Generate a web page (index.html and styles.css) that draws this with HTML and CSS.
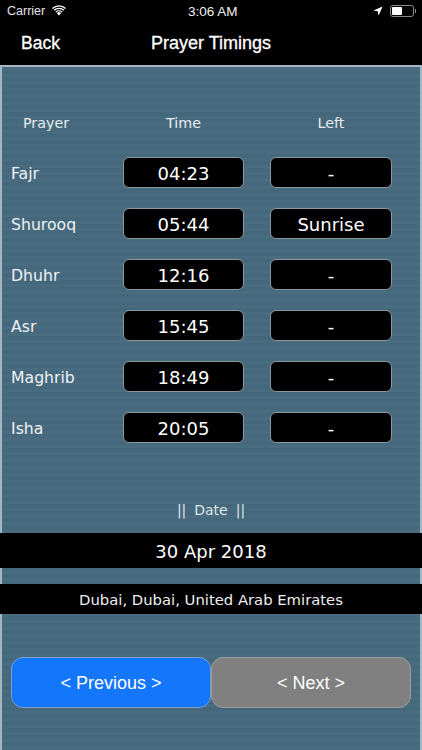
FILE: index.html
```html
<!DOCTYPE html>
<html lang="en">
<head>
  <meta charset="UTF-8">
  <meta name="viewport" content="width=device-width, initial-scale=1.0">
  <title>Prayer Timings</title>
  <link rel="stylesheet" href="styles.css">
</head>
<body>
  <div id="app">
    <!-- Status bar -->
    <div class="status-bar">
      <div class="status-left">
        <span>Carrier</span>
        <svg class="wifi" width="14" height="11" viewBox="0 0 16 12">
          <path d="M8 11.6 5.6 9a3.4 3.4 0 0 1 4.8 0z" fill="#fff"/>
          <path d="M3.9 7.3a5.9 5.9 0 0 1 8.2 0l-1 1.1a4.4 4.4 0 0 0-6.2 0z" fill="#fff"/>
          <path d="M1.9 5.2a8.8 8.8 0 0 1 12.2 0l-1 1.1a7.3 7.3 0 0 0-10.2 0z" fill="#fff"/>
          <path d="M0 3.2a11.5 11.5 0 0 1 16 0l-1 1.1a10 10 0 0 0-14 0z" fill="#fff"/>
        </svg>
      </div>
      <div class="status-time">3:06 AM</div>
      <div class="status-right">
        <svg width="10" height="10" viewBox="0 0 10 10">
          <path d="M9.6.4 5.6 9.6 4.7 5.3.4 4.4z" fill="#fff"/>
        </svg>
        <div class="battery"><div class="battery-level"></div></div>
        <div class="battery-cap"></div>
      </div>
    </div>

    <!-- Nav bar -->
    <header class="nav-bar">
      <span class="back">Back</span>
      <h1>Prayer Timings</h1>
    </header>

    <!-- Timings panel -->
    <main class="panel">
      <div class="table-head">
        <span class="head-prayer">Prayer</span>
        <span>Time</span>
        <span>Left</span>
      </div>

      <div class="timings">
        <div class="row">
          <span class="name">Fajr</span>
          <span class="box">04:23</span>
          <span class="box">-</span>
        </div>
        <div class="row">
          <span class="name">Shurooq</span>
          <span class="box">05:44</span>
          <span class="box">Sunrise</span>
        </div>
        <div class="row">
          <span class="name">Dhuhr</span>
          <span class="box">12:16</span>
          <span class="box">-</span>
        </div>
        <div class="row">
          <span class="name">Asr</span>
          <span class="box">15:45</span>
          <span class="box">-</span>
        </div>
        <div class="row">
          <span class="name">Maghrib</span>
          <span class="box">18:49</span>
          <span class="box">-</span>
        </div>
        <div class="row">
          <span class="name">Isha</span>
          <span class="box">20:05</span>
          <span class="box">-</span>
        </div>
      </div>

      <div class="date-label">|| Date ||</div>
      <div class="date-bar">30 Apr 2018</div>
      <div class="location-bar">Dubai, Dubai, United Arab Emirates</div>

      <div class="buttons">
        <button class="btn-prev">&lt; Previous &gt;</button>
        <button class="btn-next">&lt; Next &gt;</button>
      </div>
    </main>
  </div>
</body>
</html>
```

FILE: styles.css
```css
/* General reset */
* {
  margin: 0;
  padding: 0;
  box-sizing: border-box;
}

body {
  width: 422px;
  height: 750px;
  overflow: hidden;
  background-color: #000;
  font-family: "DejaVu Sans", sans-serif;
  color: #fff;
}

#app {
  height: 750px;
  display: flex;
  flex-direction: column;
}

/* Status bar */
.status-bar {
  height: 22px;
  display: flex;
  align-items: center;
  justify-content: space-between;
  position: relative;
  padding: 0 6px 0 7px;
  font-family: "Liberation Sans", sans-serif;
  font-size: 12.5px;
  color: #e6e6e6;
}

.status-left {
  display: flex;
  align-items: center;
  gap: 7px;
}

.wifi {
  margin-bottom: 2px;
}

.status-time {
  position: absolute;
  left: 188px;
  top: 4px;
  font-size: 13.5px;
  color: #f0f0f0;
}

.status-right {
  display: flex;
  align-items: center;
}

.status-right svg {
  margin-right: 7px;
}

.battery {
  width: 24px;
  height: 12px;
  border: 1px solid #8a8a8a;
  border-radius: 3px;
  padding: 1px;
}

.battery-level {
  width: 10px;
  height: 8px;
  background-color: #fff;
  border-radius: 1px;
}

.battery-cap {
  width: 1px;
  height: 4px;
  margin-left: 1px;
  background-color: #8a8a8a;
}

/* Nav bar */
.nav-bar {
  height: 43px;
  display: flex;
  align-items: center;
  position: relative;
  padding-left: 21px;
  font-family: "Liberation Sans", sans-serif;
  font-size: 17.5px;
}

.back {
  -webkit-text-stroke: 0.3px #fff;
}

.nav-bar h1 {
  position: absolute;
  left: 151px;
  top: 11px;
  font-size: 18px;
  font-weight: 400;
  -webkit-text-stroke: 0.3px #fff;
}

/* Panel */
.panel {
  flex: 1;
  border: 2px solid #a3b6c1;
  border-bottom: none;
  background-color: #476a7e;
  background-image: repeating-linear-gradient(to bottom, rgba(255, 255, 255, 0.01) 0, rgba(255, 255, 255, 0.01) 3px, rgba(0, 0, 0, 0.02) 3px, rgba(0, 0, 0, 0.02) 7px);
  display: flex;
  flex-direction: column;
}

/* Table */
.table-head {
  display: grid;
  grid-template-columns: 95px 121px 122px;
  column-gap: 26px;
  margin-top: 46px;
  height: 20px;
  align-items: center;
  font-size: 14.3px;
  color: #e6ecef;
  text-align: center;
}

.table-head .head-prayer {
  text-align: left;
  padding-left: 21px;
}

.timings {
  margin-top: 24px;
  display: flex;
  flex-direction: column;
  gap: 20px;
}

.row {
  display: grid;
  grid-template-columns: 86px 121px 122px;
  column-gap: 26px;
  align-items: center;
  padding-left: 9px;
}

.name {
  padding-top: 2px;
  font-size: 15.7px;
  color: #eef2f4;
}

.box {
  height: 31px;
  padding-top: 1px;
  background-color: #000;
  border: 1px solid #8d979c;
  border-radius: 6px;
  display: flex;
  align-items: center;
  justify-content: center;
  font-size: 18px;
}

/* Date and location */
.date-label {
  margin-top: 59px;
  text-align: center;
  font-size: 14px;
  word-spacing: 3.5px;
  color: #dfe7ea;
}

.date-bar {
  margin: 15px -2px 0;
  height: 35px;
  padding-top: 2px;
  background-color: #000;
  display: flex;
  align-items: center;
  justify-content: center;
  font-size: 18px;
}

.location-bar {
  margin: 16px -2px 0;
  height: 30px;
  background-color: #000;
  display: flex;
  align-items: center;
  justify-content: center;
  font-size: 14.8px;
  color: #eeeeee;
}

/* Buttons */
.buttons {
  display: flex;
  margin: 43px 0 0 9px;
}

.buttons button {
  width: 200px;
  height: 51px;
  padding-top: 2px;
  border-radius: 12px;
  font-family: "Liberation Sans", sans-serif;
  font-size: 18px;
  color: #fff;
}

.btn-prev {
  background-color: #1476fb;
  border: 1px solid #7d9fc9;
}

.btn-next {
  background-color: #808080;
  border: 1px solid #9c9c9c;
}
```
